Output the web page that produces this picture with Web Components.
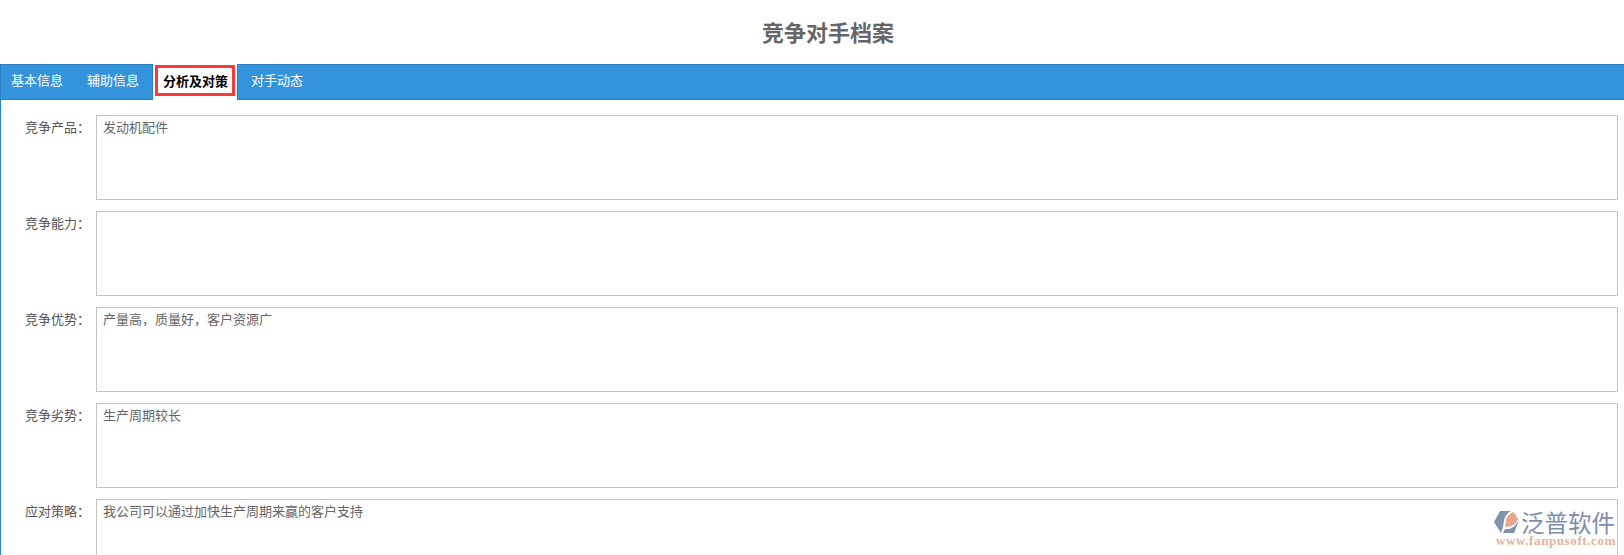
<!DOCTYPE html>
<html lang="zh">
<head>
<meta charset="utf-8">
<title>竞争对手档案</title>
<style>
  html, body { margin: 0; height: 555px; overflow: hidden; background: #fff; }
  body { font-family: "Noto Sans CJK SC", "Liberation Sans", sans-serif; }
</style>
</head>
<body>
<archive-page>
  <page-title slot="title">竞争对手档案</page-title>
  <tab-bar slot="tabs">
    <tab-item>基本信息</tab-item>
    <tab-item>辅助信息</tab-item>
    <tab-item active>分析及对策</tab-item>
    <tab-item>对手动态</tab-item>
  </tab-bar>
  <field-row label="竞争产品：">发动机配件</field-row>
  <field-row label="竞争能力："></field-row>
  <field-row label="竞争优势：">产量高，质量好，客户资源广</field-row>
  <field-row label="竞争劣势：">生产周期较长</field-row>
  <field-row label="应对策略：">我公司可以通过加快生产周期来赢的客户支持</field-row>
</archive-page>
<logo-mark></logo-mark>

<script>
class ArchivePage extends HTMLElement {
  constructor() {
    super();
    this.attachShadow({ mode: 'open' }).innerHTML = `
      <style>
        :host { display: block; }
        .content {
          display: flex;
          flex-direction: column;
          gap: 11px;
          padding: 15px 6px 0 0;
          border-left: 1px solid #2b80c5;
          height: 455px;
          box-sizing: border-box;
          overflow: hidden;
        }
      </style>
      <slot name="title"></slot>
      <slot name="tabs"></slot>
      <div class="content"><slot></slot></div>
    `;
  }
}
customElements.define('archive-page', ArchivePage);

class PageTitle extends HTMLElement {
  constructor() {
    super();
    this.attachShadow({ mode: 'open' }).innerHTML = `
      <style>
        :host {
          display: flex;
          height: 64px;
          box-sizing: border-box;
          padding: 0 0 2px 32px;
          align-items: center;
          justify-content: center;
          font-size: 22px;
          font-weight: 700;
          color: #666;
        }
      </style>
      <slot></slot>
    `;
  }
}
customElements.define('page-title', PageTitle);

class TabBar extends HTMLElement {
  constructor() {
    super();
    this.attachShadow({ mode: 'open' }).innerHTML = `
      <style>
        :host {
          display: flex;
          height: 36px;
          box-sizing: border-box;
          background: #3494db;
          border: 1px solid #2b80c5;
          border-right: 0;
        }
      </style>
      <slot></slot>
    `;
  }
}
customElements.define('tab-bar', TabBar);

class TabItem extends HTMLElement {
  constructor() {
    super();
    this.attachShadow({ mode: 'open' }).innerHTML = `
      <style>
        :host {
          display: flex;
          align-items: center;
          box-sizing: border-box;
          height: 29px;
          padding: 0 10px;
          margin-right: 4px;
          font-size: 13px;
          color: #fff;
          white-space: nowrap;
        }
        :host([active]) {
          height: 36px;
          margin: -1px 3px -1px -1px;
          padding: 0 2px;
          background: #fff;
          border-left: 1px solid #2b80c5;
          border-right: 1px solid #2b80c5;
          color: #000;
          font-weight: 700;
        }
        .mark { display: contents; }
        :host([active]) .mark {
          display: flex;
          align-items: center;
          box-sizing: border-box;
          height: 31px;
          margin-top: -3px;
          padding: 0 4px 0 5px;
          border: 3px solid #f83a3a;
        }
      </style>
      <span class="mark"><slot></slot></span>
    `;
  }
}
customElements.define('tab-item', TabItem);

class FieldRow extends HTMLElement {
  constructor() {
    super();
    this.attachShadow({ mode: 'open' }).innerHTML = `
      <style>
        :host {
          display: flex;
          flex: none;
          height: 85px;
          font-size: 13px;
          line-height: 18px;
          color: #666;
        }
        .label {
          flex: none;
          width: 95px;
          box-sizing: border-box;
          padding: 3px 6px 0 0;
          text-align: right;
          color: #555;
        }
        .box {
          flex: 1;
          box-sizing: border-box;
          padding: 2px 6px;
          border: 1px solid #c4c4c4;
        }
      </style>
      <div class="label"></div>
      <div class="box"><slot></slot></div>
    `;
    this.shadowRoot.querySelector('.label').textContent = this.getAttribute('label');
  }
}
customElements.define('field-row', FieldRow);

class LogoMark extends HTMLElement {
  constructor() {
    super();
    this.attachShadow({ mode: 'open' }).innerHTML = `
      <style>
        :host {
          position: absolute;
          left: 1494px;
          top: 510px;
          width: 122px;
          height: 36px;
        }
        .top { display: flex; align-items: center; gap: 1px; height: 24px; }
        svg { flex: none; }
        .cn {
          font-size: 23.5px;
          line-height: 24px;
          font-weight: 400;
          color: #7d8fab;
          white-space: nowrap;
        }
        .url {
          margin: 1px 0 0 2px;
          font-family: "Liberation Serif", serif;
          font-size: 13px;
          line-height: 11px;
          letter-spacing: .6px;
          font-weight: 700;
          color: #e8b09a;
          white-space: nowrap;
        }
      </style>
      <div class="top">
        <svg width="26" height="24" viewBox="0 0 26 24">
          <path d="M6 1h11q-6 3-7 10l-1 6-2 6-7-11z" fill="#8093ae"/>
          <path d="M11 17l1-7q1-5 7-8l3 3 2 4q-2 8-13 8z" fill="#e5a88e"/>
          <path d="M9 23l2-4q8 1 13-7l1-1-5 12z" fill="#8093ae"/>
        </svg>
        <span class="cn">泛普软件</span>
      </div>
      <div class="url">www.fanpusoft.com</div>
    `;
  }
}
customElements.define('logo-mark', LogoMark);
</script>
</body>
</html>
